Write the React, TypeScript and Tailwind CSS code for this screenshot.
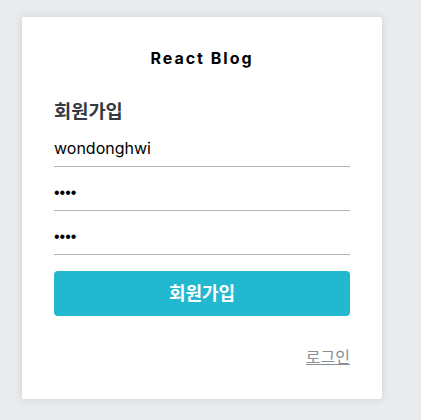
import { useState } from 'react';

const font = "font-['Inter','Noto_Sans_CJK_KR',sans-serif]";

export default function App() {
  const [username, setUsername] = useState('wondonghwi');
  const [password, setPassword] = useState('1234');
  const [passwordConfirm, setPasswordConfirm] = useState('1234');

  return (
    <div className={`min-h-screen bg-[#e9ecef] pl-[22px] pt-[17px] ${font}`}>
      <div className="w-[360px] rounded-[2px] bg-white p-8 shadow-[0_0_8px_rgba(0,0,0,0.12)]">
        <div className="pb-8 text-center text-base font-bold leading-[19px] tracking-[2px] text-black">React Blog</div>
        <h3 className="mb-4 text-[18.72px] font-bold leading-[23px] text-[#343a40]">회원가입</h3>
        <form onSubmit={(e) => e.preventDefault()}>
          <input
            type="text"
            value={username}
            onChange={(e) => setUsername(e.target.value)}
            className="block w-full border-b border-[#adb5bd] pb-2 text-base leading-[19px] text-black outline-none"
          />
          <input
            type="password"
            value={password}
            onChange={(e) => setPassword(e.target.value)}
            className="mt-4 block w-full border-b border-[#adb5bd] pb-2 font-['Liberation_Sans',sans-serif] text-base leading-[19px] text-black outline-none"
          />
          <input
            type="password"
            value={passwordConfirm}
            onChange={(e) => setPasswordConfirm(e.target.value)}
            className="mt-4 block w-full border-b border-[#adb5bd] pb-2 font-['Liberation_Sans',sans-serif] text-base leading-[19px] text-black outline-none"
          />
          <button
            type="submit"
            className="mt-4 block w-full rounded bg-[#22b8cf] px-4 py-3 text-lg font-bold leading-[21px] text-white"
          >
            회원가입
          </button>
        </form>
        <div className="mt-8 flex h-[19px] items-center justify-end">
          <a href="#" className="text-base leading-[19px] text-[#868e96] underline">로그인</a>
        </div>
      </div>
    </div>
  );
}
